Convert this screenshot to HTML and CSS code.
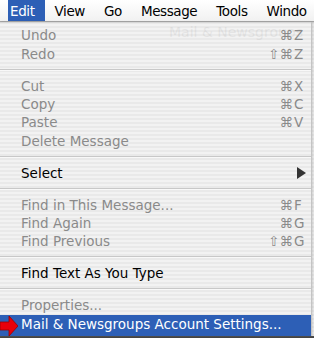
FILE: index.html
```html
<!DOCTYPE html>
<html lang="en">
<head>
  <meta charset="UTF-8" />
  <title>Edit menu</title>
  <link rel="stylesheet" href="styles.css">
</head>
<body>
  <div class="menubar">
    <div class="title open">Edit</div>
    <div class="title">View</div>
    <div class="title">Go</div>
    <div class="title">Message</div>
    <div class="title">Tools</div>
    <div class="title">Windo</div>
  </div>

  <div class="ghost">Mail &amp; Newsgroups</div>

  <div class="menu">
    <div class="item off"><span class="label">Undo</span><span class="keys"><span class="mod">⌘</span><span class="key">Z</span></span></div>
    <div class="item off"><span class="label">Redo</span><span class="keys"><span class="mod">⇧⌘</span><span class="key">Z</span></span></div>
    <div class="sep"></div>
    <div class="item off"><span class="label">Cut</span><span class="keys"><span class="mod">⌘</span><span class="key">X</span></span></div>
    <div class="item off"><span class="label">Copy</span><span class="keys"><span class="mod">⌘</span><span class="key">C</span></span></div>
    <div class="item off"><span class="label">Paste</span><span class="keys"><span class="mod">⌘</span><span class="key">V</span></span></div>
    <div class="item off"><span class="label">Delete Message</span></div>
    <div class="sep"></div>
    <div class="item"><span class="label">Select</span><span class="arrow"></span></div>
    <div class="sep"></div>
    <div class="item off"><span class="label">Find in This Message...</span><span class="keys"><span class="mod">⌘</span><span class="key">F</span></span></div>
    <div class="item off"><span class="label">Find Again</span><span class="keys"><span class="mod">⌘</span><span class="key">G</span></span></div>
    <div class="item off"><span class="label">Find Previous</span><span class="keys"><span class="mod">⇧⌘</span><span class="key">G</span></span></div>
    <div class="sep"></div>
    <div class="item"><span class="label">Find Text As You Type</span></div>
    <div class="sep"></div>
    <div class="item off"><span class="label">Properties...</span></div>
    <div class="item active">
      <svg class="pointer" width="18" height="20" viewBox="0 0 18 20">
        <polygon points="0,6 9,6 9,0 18,10 9,20 9,14 0,14" fill="#e8000a" stroke="#9a0000" stroke-width="0.8"/>
      </svg>
      <span class="label">Mail &amp; Newsgroups Account Settings...</span>
    </div>
  </div>
  <div class="edge"></div>
</body>
</html>
```

FILE: styles.css
```css
body {
  margin: 0;
  width: 314px;
  height: 338px;
  overflow: hidden;
  position: relative;
  font-family: "DejaVu Sans", "Liberation Sans", sans-serif;
  font-size: 13.5px;
  color: #000;
  background: repeating-linear-gradient(to bottom, #f2f2f2 0, #f2f2f2 2px, #e9e9e9 2px, #e9e9e9 4px);
}

.menubar {
  display: flex;
  height: 21px;
  padding-left: 8px;
  background: linear-gradient(to bottom, #ffffff, #f1f1f1);
  border-bottom: 1px solid #a8a8a8;
  box-shadow: 0 1px 0 #d6d6d6;
  white-space: nowrap;
}

.title {
  display: flex;
  align-items: center;
  flex-shrink: 0;
  padding: 0 9px 0 10px;
  font-size: 13.5px;
  letter-spacing: -0.4px;
}

.title.open {
  padding: 0 10px 0 2px;
  background: #2d5fb6;
  color: #fff;
}

.ghost {
  position: absolute;
  top: 24px;
  left: 169px;
  font-size: 14px;
  color: #000;
  opacity: 0.05;
}

.menu {
  display: flex;
  flex-direction: column;
  width: 311px;
  padding-top: 4px;
  border-right: 1px solid #c4c4c4;
  box-shadow: 1px 0 2px rgba(0, 0, 0, 0.15);
  position: relative;
}

.item {
  display: flex;
  align-items: center;
  height: 18.4px;
  padding: 0 0 0 21px;
  white-space: nowrap;
}

.item.off {
  color: #8a8a8a;
}

.label {
  flex: 1;
}

.keys {
  display: flex;
}

.mod {
  text-align: right;
  margin-right: 1px;
}

.key {
  width: 17px;
}

.arrow {
  width: 0;
  height: 0;
  margin-right: 5px;
  border-left: 9px solid #333;
  border-top: 6px solid transparent;
  border-bottom: 6px solid transparent;
}

.sep {
  height: 13.6px;
  display: flex;
  align-items: center;
}

.sep::before {
  content: "";
  flex: 1;
  height: 1px;
  background: #c8c8c8;
  border-bottom: 1px solid #f8f8f8;
}

.item.active {
  height: 21px;
  padding-bottom: 2px;
  box-sizing: border-box;
  background: #2d5fb6;
  color: #fff;
  position: relative;
}

.pointer {
  position: absolute;
  left: 0;
  top: 1px;
}

.edge {
  height: 4px;
  background: linear-gradient(to bottom, #555, #2a2a2a);
}
```
